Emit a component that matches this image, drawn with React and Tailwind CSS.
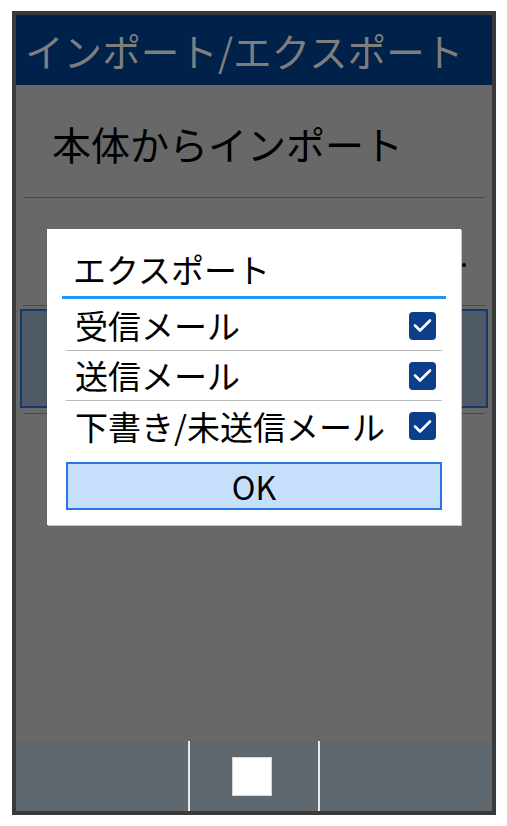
const font = { fontFamily: '"Noto Sans CJK JP", "Noto Sans", sans-serif' };

const rows = ['受信メール', '送信メール', '下書き/未送信メール'];

function CheckBox() {
  return (
    <div className="flex h-[28px] w-[27px] shrink-0 items-center justify-center rounded-[4px] bg-[#0b3f8c]">
      <svg width="19" height="15" viewBox="0 0 19 15" fill="none">
        <path d="M2 7.5 L7 12.5 L17 2.5" stroke="#ffffff" strokeWidth="2.6" strokeLinecap="round" strokeLinejoin="round" />
      </svg>
    </div>
  );
}

export default function App() {
  return (
    <div className="h-[826px] w-[507px] bg-white pl-[12px] pt-[11px]" style={font}>
      <div className="flex h-[804px] w-[484px] flex-col border-4 border-[#3a3a3a]">
        {/* Title bar */}
        <div className="flex h-[70px] items-center bg-[#00214a] pl-[9px]">
          <span className="whitespace-nowrap text-[38.6px] leading-none text-[#7e7e7e]">インポート/エクスポート</span>
        </div>

        {/* List (dimmed) */}
        <div className="relative flex-1 bg-[#686868] pt-[5px]">
          <div className="mx-[7px] flex h-[108px] items-center border-b border-[#4a4a4a] pl-[29px]">
            <span className="whitespace-nowrap text-[39px] leading-none text-black">本体からインポート</span>
          </div>
          <div className="mx-[7px] flex h-[108px] items-center justify-end border-b border-[#4a4a4a]">
            <span className="mr-[19px] mt-[26px] h-[4px] w-[4px] rounded-full bg-black" />
          </div>
          <div className="mx-[7px] h-[108px] border-b border-[#4a4a4a] pt-[3px]">
            <div className="-mx-[3px] h-[99px] border-2 border-[#15386a] bg-[#4e5966]" />
          </div>

          {/* Dialog */}
          <div className="absolute left-[31px] top-[144px] w-[414px] bg-white px-[19px] pb-[15px] shadow-[1px_1px_0_#c4c4c4]">
            <div className="-mx-[4px] flex h-[67px] items-center pl-[11px] pt-[14px]">
              <span className="text-[33px] leading-none text-black">エクスポート</span>
            </div>
            <div className="-mx-[4px] h-[3px] bg-[#2196f3]" />
            <div className="pt-[2px]">
              {rows.map((r, i) => (
                <div
                  key={r}
                  className={`flex h-[50px] items-center justify-between pl-[9px] pr-[6px] ${
                    i < rows.length - 1 ? 'border-b border-[#b9b9b9]' : ''
                  }`}
                >
                  <span className="whitespace-nowrap text-[33px] leading-none text-black">{r}</span>
                  <CheckBox />
                </div>
              ))}
            </div>
            <div className="mt-[11px] flex h-[48px] items-center justify-center border-2 border-[#2877e0] bg-[#c6e0fc]">
              <span className="text-[32px] leading-none text-black">OK</span>
            </div>
          </div>
        </div>

        {/* Soft keys */}
        <div className="flex h-[70px] bg-[#5f676f]">
          <div className="w-[172px]" />
          <div className="w-[2px] bg-[#e8e8e8]" />
          <div className="flex w-[128px] items-center justify-center pr-[4px]">
            <div className="h-[39px] w-[40px] border border-[#d8d8d8] bg-white" />
          </div>
          <div className="w-[2px] bg-[#e8e8e8]" />
          <div className="flex-1" />
        </div>
      </div>
    </div>
  );
}
